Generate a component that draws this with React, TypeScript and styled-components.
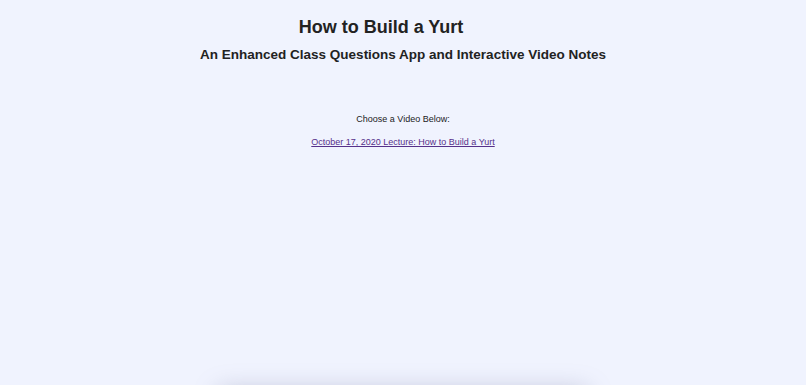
import styled, { createGlobalStyle } from 'styled-components'

const GlobalStyle = createGlobalStyle`
    html, body {
        margin: 0;
        padding: 0;
        background: #f0f3fe;
        font-family: "Liberation Sans", Arial, Helvetica, sans-serif;
        color: #222;
    }
`

const Page = styled.div`
    display: flex;
    flex-direction: column;
    align-items: center;
    padding-top: 17px;
`

const Title = styled.h1`
    margin: 0 44px 0 0;
    font-size: 18px;
    line-height: 21px;
    font-weight: bold;
    color: #222;
`

const Subtitle = styled.h2`
    margin: 9px 0 0;
    font-size: 13.5px;
    line-height: 16px;
    font-weight: bold;
    color: #222;
`

const Picker = styled.div`
    display: flex;
    flex-direction: column;
    align-items: center;
    margin-top: 51px;
    gap: 12px;
    font-size: 9px;
    line-height: 11px;
`

const Prompt = styled.p`
    margin: 0;
    color: #222;
`

const VideoLink = styled.a`
    color: #56308a;
    text-decoration: underline;
`

const Card = styled.div`
    margin-top: 242px;
    width: 370px;
    height: 300px;
    background: #f0f3fe;
    box-shadow: 0 0 24px rgba(120, 125, 160, 0.4);
    border-radius: 6px;
`

export default function App() {
    return (
        <>
            <GlobalStyle />
            <Page>
                <Title>How to Build a Yurt</Title>
                <Subtitle>An Enhanced Class Questions App and Interactive Video Notes</Subtitle>
                <Picker>
                    <Prompt>Choose a Video Below:</Prompt>
                    <VideoLink href="#">October 17, 2020 Lecture: How to Build a Yurt</VideoLink>
                </Picker>
                <Card />
            </Page>
        </>
    )
}
